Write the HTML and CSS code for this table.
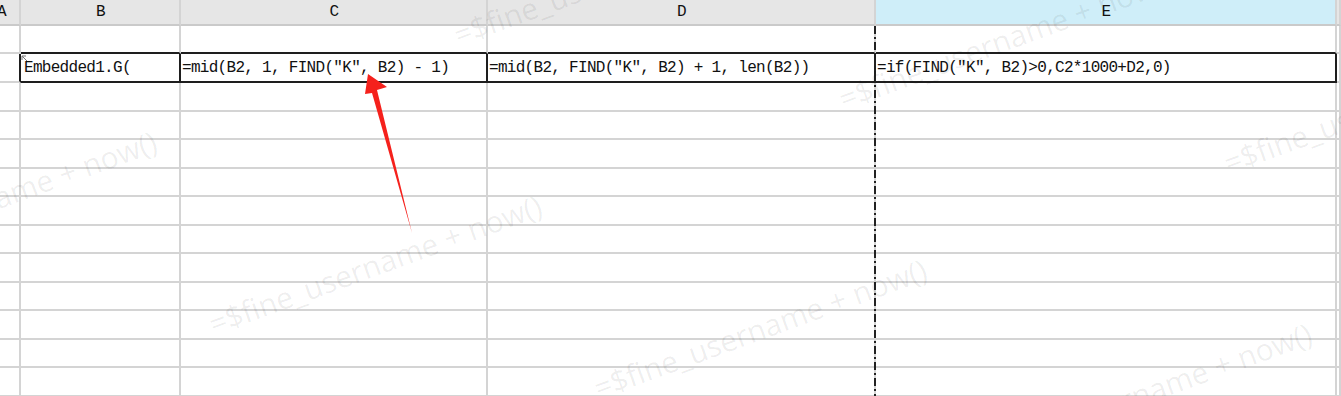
FILE: index.html
```html
<!DOCTYPE html>
<html lang="zh">
<head>
  <meta charset="UTF-8">
  <meta name="viewport" content="width=device-width, initial-scale=1.0">
  <title>报表设计 - 单元格公式</title>
  <link rel="stylesheet" href="styles.css">
</head>
<body>
  <div class="sheet">
    <table class="grid">
      <colgroup>
        <col class="col-a">
        <col class="col-b">
        <col class="col-c">
        <col class="col-d">
        <col class="col-e">
        <col class="col-f">
      </colgroup>
      <tr class="head">
        <td class="col-name cut">A</td>
        <td class="col-name">B</td>
        <td class="col-name">C</td>
        <td class="col-name">D</td>
        <td class="col-name active">E</td>
        <td class="col-name"></td>
      </tr>
      <tr>
        <td></td>
        <td class="above-sel"></td>
        <td class="above-sel"></td>
        <td class="above-sel"></td>
        <td class="above-sel"></td>
        <td></td>
      </tr>
      <tr class="tall">
        <td class="before-sel"></td>
        <td class="sel first">
          <svg class="corner-mark" width="7" height="7" viewBox="0 0 7 7"><path d="M1 1 L5 1 M1 1 L1 5 M1 1 L6 6" stroke="#777" stroke-width="1" fill="none"/></svg>
          Embedded1.G(
        </td>
        <td class="sel">=mid(B2, 1, FIND("K", B2) - 1)</td>
        <td class="sel">=mid(B2, FIND("K", B2) + 1, len(B2))</td>
        <td class="sel">=if(FIND("K", B2)&gt;0,C2*1000+D2,0)</td>
        <td></td>
      </tr>
      <tr class="tall"><td></td><td></td><td></td><td></td><td></td><td></td></tr>
      <tr><td></td><td></td><td></td><td></td><td></td><td></td></tr>
      <tr class="tall"><td></td><td></td><td></td><td></td><td></td><td></td></tr>
      <tr><td></td><td></td><td></td><td></td><td></td><td></td></tr>
      <tr class="tall"><td></td><td></td><td></td><td></td><td></td><td></td></tr>
      <tr><td></td><td></td><td></td><td></td><td></td><td></td></tr>
      <tr class="tall"><td></td><td></td><td></td><td></td><td></td><td></td></tr>
      <tr><td></td><td></td><td></td><td></td><td></td><td></td></tr>
      <tr class="tall"><td></td><td></td><td></td><td></td><td></td><td></td></tr>
      <tr><td></td><td></td><td></td><td></td><td></td><td></td></tr>
      <tr class="tall"><td></td><td></td><td></td><td></td><td></td><td></td></tr>
    </table>

    <!-- page break between D and E -->
    <div class="page-break"></div>

    <!-- arrow pointing at the "K" argument -->
    <svg class="pointer" width="1341" height="396" viewBox="0 0 1341 396">
      <polygon points="368,74 387,87 377,90 412,233 372,93 365,94" fill="#f5211c"/>
    </svg>

    <div class="watermarks">
      <span class="wm" style="left:460px; top:20px">=$fine_username + now()</span>
      <span class="wm" style="left:845px; top:84px">=$fine_username + now()</span>
      <span class="wm" style="left:1230px; top:148px">=$fine_username + now()</span>
      <span class="wm" style="left:-170px; top:245px">=$fine_username + now()</span>
      <span class="wm" style="left:215px; top:309px">=$fine_username + now()</span>
      <span class="wm" style="left:600px; top:373px">=$fine_username + now()</span>
      <span class="wm" style="left:985px; top:437px">=$fine_username + now()</span>
    </div>
  </div>
</body>
</html>
```

FILE: styles.css
```css
* {
  box-sizing: border-box;
}
body {
  margin: 0;
  background: #fff;
  overflow: hidden;
  font-family: "Liberation Mono", monospace;
}

.sheet {
  position: relative;
  width: 1341px;
  height: 396px;
  overflow: hidden;
}

.grid {
  table-layout: fixed;
  border-collapse: separate;
  border-spacing: 0;
  width: 1341px;
}
.col-a { width: 21px; }
.col-b { width: 160px; }
.col-c { width: 307px; }
.col-d { width: 388px; }
.col-e { width: 461px; }
.col-f { width: 4px; }

.grid tr {
  height: 28px;
}
.grid tr.tall {
  height: 29px;
}
.grid tr.head {
  height: 26px;
}
.grid td {
  padding: 0 0 0 1px;
  border-right: 2px solid #d4d4d4;
  border-bottom: 2px solid #d4d4d4;
  font-size: 16px;
  letter-spacing: -0.7px;
  color: #111;
  white-space: nowrap;
  overflow: hidden;
  vertical-align: middle;
}

.col-name {
  background: #e6e6e6;
  text-align: center;
  border-bottom-color: #cacaca !important;
  padding: 0;
}
.col-name.active {
  background: #cfeef9;
}
.col-name.cut {
  text-align: left;
  text-indent: -4px;
}

/* selected block B2:E2 */
.grid td.above-sel {
  border-bottom-color: #1e1e1e;
}
.grid td.before-sel {
  border-right-color: #1e1e1e;
}
.grid td.sel {
  border-right-color: #1e1e1e;
  border-bottom-color: #1e1e1e;
}
.grid td.first {
  position: relative;
  padding-left: 3px;
}
.corner-mark {
  position: absolute;
  left: 0;
  top: 1px;
}

.page-break {
  position: absolute;
  left: 874px;
  top: 26px;
  width: 2px;
  height: 370px;
  background: repeating-linear-gradient(to bottom,
    #222 0, #222 8px,
    transparent 8px, transparent 11px,
    #222 11px, #222 13px,
    transparent 13px, transparent 16px);
}

.pointer {
  position: absolute;
  left: 0;
  top: 0;
  pointer-events: none;
}

.watermarks {
  position: absolute;
  inset: 0;
  pointer-events: none;
}
.wm {
  position: absolute;
  font-family: "Open Sans", sans-serif;
  font-size: 30px;
  line-height: 30px;
  color: rgba(0, 0, 0, 0.07);
  white-space: nowrap;
  transform-origin: 0 100%;
  transform: rotate(-20deg);
}
```
